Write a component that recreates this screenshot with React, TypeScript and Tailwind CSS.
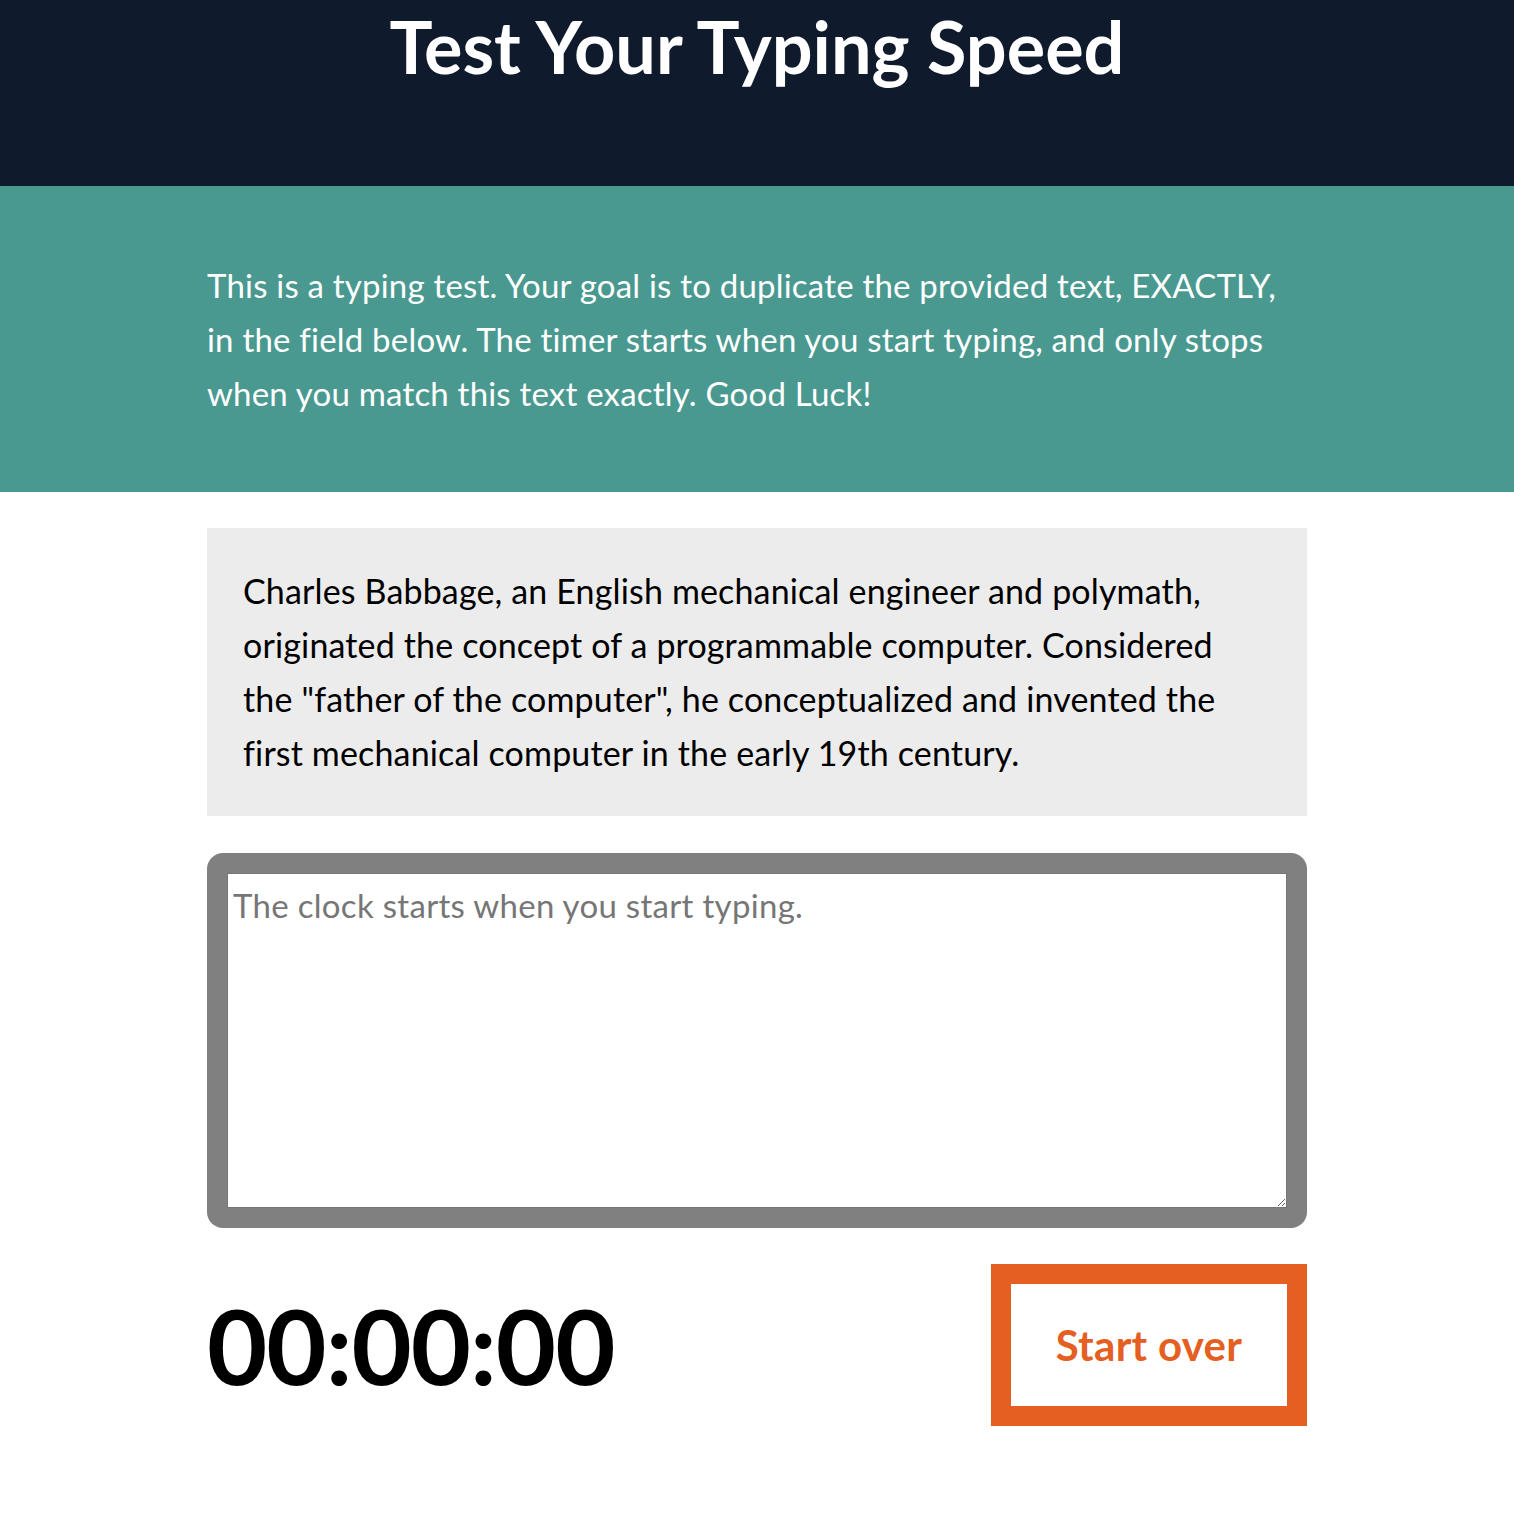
import React, { useState } from 'react';

const SAMPLE =
  'Charles Babbage, an English mechanical engineer and polymath, originated the concept of a programmable computer. Considered the "father of the computer", he conceptualized and invented the first mechanical computer in the early 19th century.';

const App: React.FC = () => {
  const [value, setValue] = useState('');

  return (
    <div className="min-h-[1514px] bg-white font-['Lato',sans-serif]">
      {/* Header */}
      <header className="h-[186px] bg-[#0f1b2d] text-center">
        <h1 className="pt-[8px] text-[72px] font-bold leading-[76px] text-white">
          Test Your Typing Speed
        </h1>
      </header>

      {/* Intro */}
      <section className="bg-[#4a9990] py-[72px]">
        <p className="mx-auto w-[1100px] text-[33px] leading-[54px] tracking-[0.2px] text-white">
          This is a typing test. Your goal is to duplicate the provided text, EXACTLY, in the field
          below. The timer starts when you start typing, and only stops when you match this text
          exactly. Good Luck!
        </p>
      </section>

      <main className="mx-auto w-[1100px] pt-[36px]">
        {/* Text to copy */}
        <div className="bg-[#ececec] px-[36px] py-[36px]">
          <p className="w-[1000px] text-[34px] leading-[54px] tracking-[0.15px] text-black">{SAMPLE}</p>
        </div>

        {/* Input */}
        <div className="mt-[37px] rounded-[16px] bg-[#808080] p-[20px]">
          <textarea
            value={value}
            onChange={(e) => setValue(e.target.value)}
            placeholder="The clock starts when you start typing."
            className="block h-[335px] w-full resize-y border border-[#767676] bg-white px-[5px] py-[5px] text-[33px] leading-[52px] tracking-[0.3px] text-black outline-none placeholder:text-[#767676]"
          />
        </div>

        {/* Timer + reset */}
        <div className="mt-[36px] flex items-center justify-between">
          <div className="text-[104px] font-bold leading-none tracking-[-1px] text-black">00:00:00</div>
          <button
            type="button"
            onClick={() => setValue('')}
            className="h-[162px] w-[316px] border-[20px] border-[#e55f22] bg-white text-[42px] font-bold tracking-[0.3px] text-[#e55f22]"
          >
            Start over
          </button>
        </div>
      </main>
    </div>
  );
};

export default App;
